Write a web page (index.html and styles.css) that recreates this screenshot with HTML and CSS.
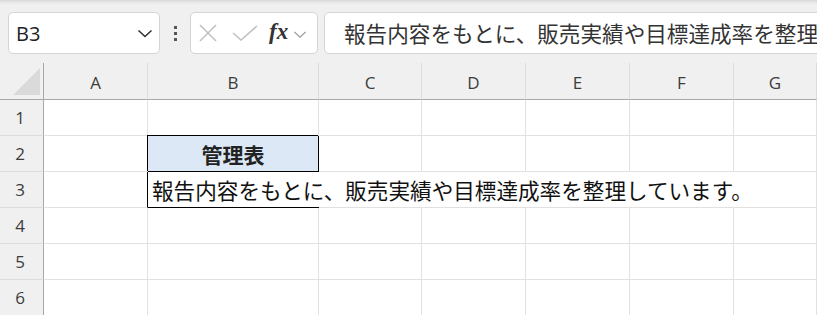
FILE: index.html
```html
<html>
    <head>
        <title>管理表</title>
        <link rel="stylesheet" href="styles.css">
    </head>
    <body>
        <div id="toolbar">
            <div class="namebox">
                <span class="ref">B3</span>
                <svg class="chev" width="16" height="9" viewBox="0 0 16 9"><polyline points="1.5,1.5 8,7.5 14.5,1.5" fill="none" stroke="#333" stroke-width="1.6"/></svg>
            </div>
            <div class="dots"><i></i><i></i><i></i></div>
            <div class="fbtns">
                <svg class="cancel" width="18" height="18" viewBox="0 0 18 18"><path d="M1 1L17 17M17 1L1 17" stroke="#c2c2c2" stroke-width="1.6"/></svg>
                <svg class="enter" width="26" height="16" viewBox="0 0 26 16"><polyline points="1,8 9,15 25,1" fill="none" stroke="#c2c2c2" stroke-width="1.6"/></svg>
                <span class="fx">fx</span>
                <svg class="chev small" width="16" height="9" viewBox="0 0 16 9"><polyline points="1.5,1.5 8,7.5 14.5,1.5" fill="none" stroke="#9a9a9a" stroke-width="1.5"/></svg>
            </div>
            <div class="formula">報告内容をもとに、販売実績や目標達成率を整理しています。</div>
        </div>
        <div id="sheet">
            <div class="corner"><div class="tri"></div></div>
            <div class="ch">A</div>
            <div class="ch">B</div>
            <div class="ch">C</div>
            <div class="ch">D</div>
            <div class="ch">E</div>
            <div class="ch">F</div>
            <div class="ch">G</div>

            <div class="rh">1</div>
            <div class="c"></div><div class="c"></div><div class="c"></div><div class="c"></div><div class="c"></div><div class="c"></div><div class="c"></div>

            <div class="rh">2</div>
            <div class="c"></div>
            <div class="c title">管理表</div>
            <div class="c"></div><div class="c"></div><div class="c"></div><div class="c"></div><div class="c"></div>

            <div class="rh">3</div>
            <div class="c edge"></div>
            <div class="c open boxed"><span class="spill">報告内容をもとに、販売実績や目標達成率を整理しています。</span></div>
            <div class="c open"></div><div class="c open"></div><div class="c open"></div><div class="c open"></div><div class="c"></div>

            <div class="rh">4</div>
            <div class="c"></div><div class="c"></div><div class="c"></div><div class="c"></div><div class="c"></div><div class="c"></div><div class="c"></div>

            <div class="rh">5</div>
            <div class="c"></div><div class="c"></div><div class="c"></div><div class="c"></div><div class="c"></div><div class="c"></div><div class="c"></div>

            <div class="rh">6</div>
            <div class="c"></div><div class="c"></div><div class="c"></div><div class="c"></div><div class="c"></div><div class="c"></div><div class="c"></div>
        </div>
    </body>
</html>
```

FILE: styles.css
```css
body {
    margin: 0;
    padding: 0;
    background: #f0f0f0;
    font-family: "Noto Sans", "Noto Sans CJK JP", sans-serif;
    overflow: hidden;
}
#toolbar {
    height: 63px;
    box-sizing: border-box;
    padding: 12px 0 0 8px;
    display: flex;
    align-items: flex-start;
    background: linear-gradient(#d6d6d6 0, #e6e6e6 2px, #f0f0f0 5px);
}
.namebox {
    width: 152px;
    height: 42px;
    box-sizing: border-box;
    background: #fff;
    border: 1px solid #d4d4d4;
    border-radius: 5px;
    display: flex;
    align-items: center;
    justify-content: space-between;
    padding: 0 6px 0 7px;
}
.ref {
    font-family: "Open Sans", "Noto Sans", sans-serif;
    font-size: 20px;
    color: #222;
    margin-top: 1px;
}
.chev {
    display: block;
}
.dots {
    width: 30px;
    height: 42px;
    display: flex;
    flex-direction: column;
    align-items: center;
    justify-content: center;
    gap: 3px;
}
.dots i {
    width: 3px;
    height: 3px;
    background: #555;
}
.fbtns {
    width: 128px;
    height: 42px;
    box-sizing: border-box;
    background: #fff;
    border: 1px solid #d4d4d4;
    border-radius: 5px;
    display: flex;
    align-items: center;
    padding-left: 8px;
}
.cancel {
    margin-right: 15px;
}
.enter {
    margin-right: 11px;
}
.fx {
    font-family: "Liberation Serif", serif;
    font-style: italic;
    font-weight: bold;
    font-size: 23px;
    color: #333;
    margin-top: -3px;
    margin-right: 5px;
}
.chev.small {
    width: 14px;
    margin-top: 2px;
}
.formula {
    flex: 1;
    margin-left: 6px;
    margin-right: -20px;
    height: 42px;
    box-sizing: border-box;
    background: #fff;
    border: 1px solid #d4d4d4;
    border-radius: 5px;
    padding-left: 19px;
    font-family: "Noto Sans CJK JP", sans-serif;
    font-size: 21.6px;
    line-height: 40px;
    color: #333;
    white-space: nowrap;
    overflow: hidden;
}
#sheet {
    display: grid;
    grid-template-columns: 44px 104px 171px 103px 104px 104px 104px 1fr;
    grid-template-rows: 37px repeat(6, 36px);
    background: #fff;
}
.corner {
    background: #f0f0f0;
    border-right: 1px solid #a8a8a8;
    border-bottom: 1px solid #a8a8a8;
    padding: 5px 3px 3px 13px;
}
.tri {
    width: 27px;
    height: 27px;
    background: #dadada;
    clip-path: polygon(100% 0, 100% 100%, 0 100%);
}
.ch {
    background: #f0f0f0;
    border-right: 1px solid #dcdcdc;
    border-bottom: 1px solid #a8a8a8;
    display: flex;
    align-items: center;
    justify-content: center;
    font-family: "Open Sans", "Noto Sans", sans-serif;
    font-size: 17px;
    color: #3c3c3c;
    padding-top: 2px;
}
.rh {
    background: #f0f0f0;
    border-right: 1px solid #a8a8a8;
    border-bottom: 1px solid #dcdcdc;
    display: flex;
    align-items: center;
    justify-content: center;
    font-family: "Open Sans", "Noto Sans", sans-serif;
    font-size: 17px;
    color: #3c3c3c;
    padding-right: 3px;
}
.c {
    border-right: 1px solid #e1e1e1;
    border-bottom: 1px solid #e1e1e1;
    min-width: 0;
}
.c.edge {
    border-right-color: #000;
}
.c.open {
    border-right: none;
}
.title {
    background: #dce8f6;
    border-right-color: #000;
    border-bottom-color: #000;
    box-shadow: -1px -1px 0 0 #000;
    position: relative;
    display: flex;
    align-items: center;
    justify-content: center;
    font-family: "Noto Sans CJK JP", sans-serif;
    font-weight: bold;
    font-size: 21px;
    color: #222;
}
.boxed {
    border-bottom-color: #000;
    overflow: visible;
    position: relative;
}
.spill {
    white-space: nowrap;
    font-family: "Noto Sans CJK JP", sans-serif;
    font-size: 21.6px;
    line-height: 35px;
    color: #111;
    padding-left: 4px;
    display: block;
}
```
